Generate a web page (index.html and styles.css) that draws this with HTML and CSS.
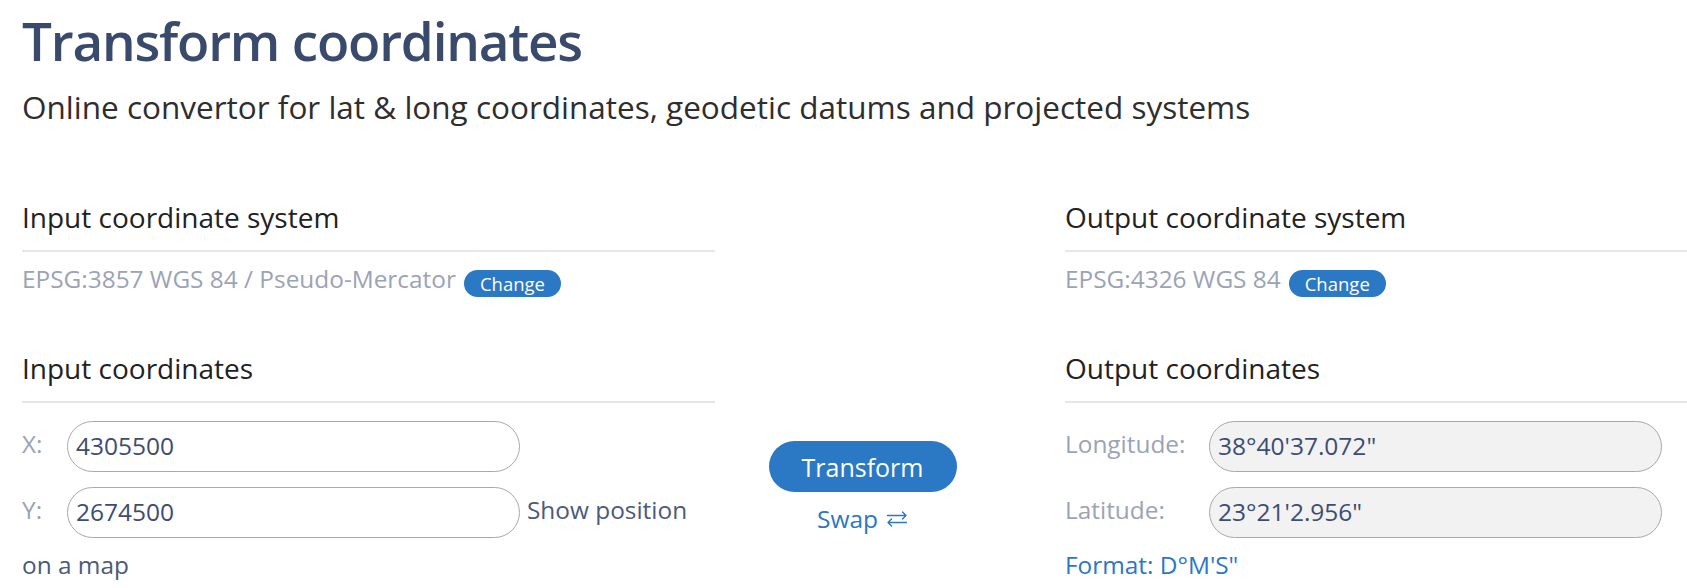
FILE: index.html
```html
<!DOCTYPE html>
<html lang="en">
<head>
<meta charset="utf-8">
<title>Transform coordinates</title>
<link rel="stylesheet" href="styles.css">
</head>
<body>
<div class="page">
  <h1 class="title">Transform coordinates</h1>
  <p class="subtitle">Online convertor for lat &amp; long coordinates, geodetic datums and projected systems</p>

  <div class="band band-sys">
    <section class="col col-left">
      <h2 class="sec-head">Input coordinate system</h2>
      <div class="sys-row">
        <span class="sys-name">EPSG:3857 WGS 84 / Pseudo-Mercator</span>
        <button class="pill">Change</button>
      </div>
    </section>
    <div class="col col-mid"></div>
    <section class="col col-right">
      <h2 class="sec-head">Output coordinate system</h2>
      <div class="sys-row">
        <span class="sys-name">EPSG:4326 WGS 84</span>
        <button class="pill">Change</button>
      </div>
    </section>
  </div>

  <div class="band band-coords">
    <section class="col col-left">
      <h2 class="sec-head">Input coordinates</h2>
      <div class="coord-row first">
        <label class="coord-label in-label">X:</label>
        <div class="field">4305500</div>
      </div>
      <div class="coord-row">
        <label class="coord-label in-label">Y:</label>
        <div class="field">2674500</div>
        <a class="map-link">Show position</a>
      </div>
      <a class="map-link wrap">on a map</a>
    </section>
    <div class="col col-mid">
      <button class="transform">Transform</button>
      <a class="swap">Swap <svg class="swap-ico" width="22" height="16" viewBox="0 0 22 16"><path d="M1.5 4.5H20M16.5 1L20 4.5L16.5 8M2 11.5H20.5M5.5 8L2 11.5L5.5 15" fill="none" stroke="#2b78c4" stroke-width="1.4" stroke-linecap="round" stroke-linejoin="round"/></svg></a>
    </div>
    <section class="col col-right">
      <h2 class="sec-head">Output coordinates</h2>
      <div class="coord-row first">
        <label class="coord-label out-label">Longitude:</label>
        <div class="field ro">38°40'37.072"</div>
      </div>
      <div class="coord-row">
        <label class="coord-label out-label">Latitude:</label>
        <div class="field ro">23°21'2.956"</div>
      </div>
      <a class="format">Format: D°M'S"</a>
    </section>
  </div>
</div>
</body>
</html>
```

FILE: styles.css
```css
html, body {
  margin: 0;
  padding: 0;
  background: #ffffff;
}
body {
  font-family: "Open Sans", "Liberation Sans", sans-serif;
  color: #2a2a2a;
  overflow: hidden;
}
.page {
  padding-left: 22px;
}
.title {
  margin: 9px 0 0;
  font-size: 53px;
  line-height: 64px;
  font-weight: 600;
  letter-spacing: -1.2px;
  color: #3a4a6c;
}
.subtitle {
  margin: 14px 0 0;
  font-size: 31.5px;
  line-height: 40px;
  color: #2e2e2e;
}
.band {
  display: flex;
}
.band-sys {
  margin-top: 74px;
}
.band-coords {
  margin-top: 55px;
}
.col-left {
  width: 693px;
}
.col-mid {
  width: 295px;
  display: flex;
  flex-direction: column;
  align-items: center;
}
.col-right {
  flex: 1;
  margin-left: 55px;
}
.sec-head {
  margin: 0;
  font-size: 28px;
  line-height: 32px;
  font-weight: 400;
  color: #222222;
  padding-bottom: 17px;
  border-bottom: 2px solid #e7e7e7;
}
.sys-row {
  display: flex;
  align-items: flex-start;
  gap: 8px;
  margin-top: 12px;
}
.sys-name {
  font-size: 24.4px;
  line-height: 30px;
  color: #9ba3b6;
}
.pill {
  margin-top: 6px;
  height: 27px;
  padding: 0 16px;
  border: none;
  border-radius: 14px;
  background: #2b78c4;
  color: #ffffff;
  font-family: "Open Sans", sans-serif;
  font-size: 18.5px;
  line-height: 27px;
}
.coord-row {
  display: flex;
  align-items: center;
  margin-top: 15px;
}
.coord-row.first {
  margin-top: 18px;
}
.coord-label {
  font-size: 24.4px;
  line-height: 30px;
  margin-bottom: 5px;
  color: #9ba3b6;
}
.in-label {
  width: 45px;
}
.out-label {
  width: 144px;
}
.field {
  box-sizing: border-box;
  width: 453px;
  height: 51px;
  border: 1.5px solid #a9a9a9;
  border-radius: 26px;
  padding: 0 8px;
  font-size: 24.5px;
  line-height: 47px;
  color: #3c4d73;
  background: #ffffff;
}
.field.ro {
  background: #f2f2f2;
}
.map-link {
  font-size: 24.4px;
  line-height: 30px;
  color: #4b5a7c;
  margin-left: 7px;
  margin-bottom: 5px;
}
.map-link.wrap {
  display: block;
  margin: 12px 0 0;
}
.transform {
  margin-top: 89px;
  width: 188px;
  height: 51px;
  border: none;
  border-radius: 26px;
  background: #2b78c4;
  color: #ffffff;
  font-family: "Open Sans", sans-serif;
  font-size: 25px;
}
.swap {
  margin-top: 12px;
  font-size: 24.5px;
  line-height: 30px;
  color: #2b78c4;
  display: flex;
  align-items: center;
  gap: 8px;
}
.format {
  display: block;
  margin-top: 12px;
  font-size: 24.4px;
  line-height: 30px;
  color: #2b78c4;
}
```
